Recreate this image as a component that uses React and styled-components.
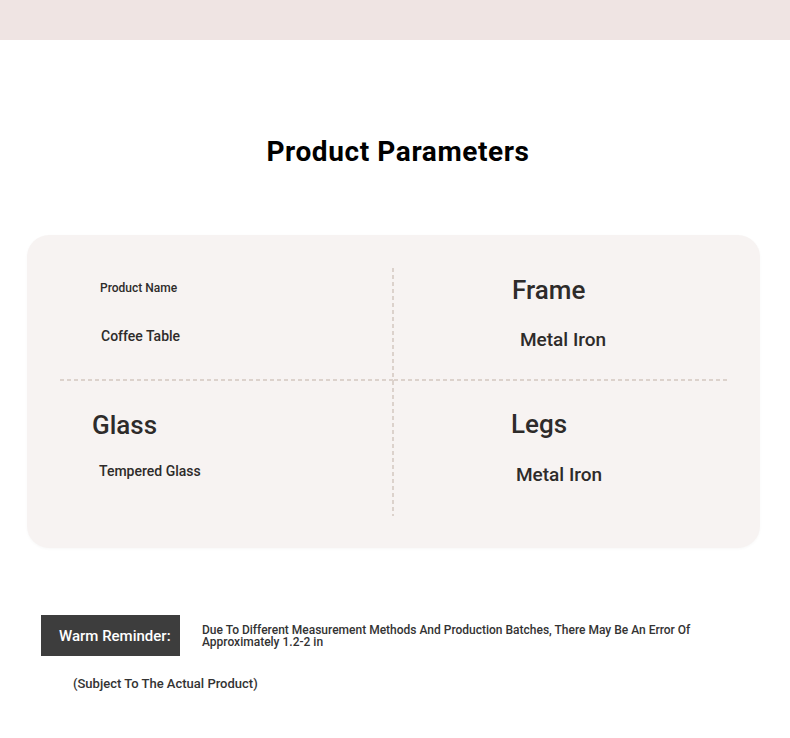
import React from 'react';
import styled, { createGlobalStyle } from 'styled-components';

const GlobalStyle = createGlobalStyle`
  body {
    margin: 0;
    background: #fff;
    font-family: Roboto, "Liberation Sans", sans-serif;
  }
`;

const dash = '#dcd2cc';

const params = [
  {
    label: 'Product Name', value: 'Coffee Table',
    labelSize: 12, valueSize: 14, labelX: 40, valueX: 41, labelTop: 13, valueGap: 32.5,
  },
  {
    label: 'Frame', value: 'Metal Iron',
    labelSize: 26, valueSize: 19, labelX: 118, valueX: 126, labelTop: 6.5, valueGap: 23,
  },
  {
    label: 'Glass', value: 'Tempered Glass',
    labelSize: 26, valueSize: 14, labelX: 32, valueX: 39, labelTop: 29, valueGap: 21.5,
  },
  {
    label: 'Legs', value: 'Metal Iron',
    labelSize: 26, valueSize: 19, labelX: 117, valueX: 122, labelTop: 28, valueGap: 24,
  },
];

const App = () => {
  return (
    <Page>
      <GlobalStyle />
      <TopBar />
      <TitleWrap>
        <Title>Product Parameters</Title>
      </TitleWrap>
      <Card>
        <Grid>
          {params.map((p, i) => (
            <Cell key={p.label} $right={i % 2 === 1} $bottom={i < 2}>
              <Label $size={p.labelSize} $x={p.labelX} $top={p.labelTop}>{p.label}</Label>
              <Value $size={p.valueSize} $x={p.valueX} $top={p.valueGap}>{p.value}</Value>
            </Cell>
          ))}
        </Grid>
      </Card>
      <Reminder>
        <ReminderTag>Warm Reminder:</ReminderTag>
        <ReminderText>
          Due To Different Measurement Methods And Production Batches, There May Be An Error Of
          Approximately 1.2-2 in
        </ReminderText>
      </Reminder>
      <Note>(Subject To The Actual Product)</Note>
    </Page>
  );
};

const Page = styled.div`
  width: 790px;
  height: 738px;
  background: #fff;
  overflow: hidden;
`;

const TopBar = styled.div`
  height: 40px;
  background: #efe4e3;
`;

const TitleWrap = styled.div`
  display: flex;
  justify-content: center;
  padding: 95px 0 67px 6px;
`;

const Title = styled.h1`
  margin: 0;
  font-size: 28px;
  line-height: 33px;
  font-weight: 700;
  color: #000;
  letter-spacing: 0.6px;
`;

const Card = styled.div`
  margin: 0 30px 0 27px;
  padding: 33px 33px 32px;
  background: #f7f3f2;
  border-radius: 22px;
  box-shadow: 0 1px 3px rgba(0, 0, 0, 0.03);
`;

const Grid = styled.div`
  display: grid;
  grid-template-columns: 334px 333px;
  grid-template-rows: 113px 135px;
`;

// dashed dividers drawn as short 2px dashes on the cell's right / bottom edge
const Cell = styled.div`
  display: flex;
  flex-direction: column;
  align-items: flex-start;
  background-repeat: no-repeat;
  background-image: ${(p) => [
    !p.$right && `repeating-linear-gradient(to bottom, ${dash} 0 4px, transparent 4px 7px)`,
    p.$bottom && `repeating-linear-gradient(to right, ${dash} 0 4px, transparent 4px 7px)`,
  ].filter(Boolean).join(', ') || 'none'};
  background-size: ${(p) => [
    !p.$right && '2px 100%',
    p.$bottom && '100% 2px',
  ].filter(Boolean).join(', ') || 'auto'};
  background-position: ${(p) => [
    !p.$right && 'right top',
    p.$bottom && 'left bottom',
  ].filter(Boolean).join(', ') || '0 0'};
`;

const Label = styled.div`
  margin-top: ${(p) => p.$top}px;
  margin-left: ${(p) => p.$x}px;
  font-size: ${(p) => p.$size}px;
  line-height: 1.2;
  font-weight: 500;
  color: #2e2b2a;
`;

const Value = styled.div`
  margin-top: ${(p) => p.$top}px;
  margin-left: ${(p) => p.$x}px;
  font-size: ${(p) => p.$size}px;
  line-height: 1.2;
  font-weight: 500;
  color: #2e2b2a;
`;

const Reminder = styled.div`
  display: flex;
  align-items: center;
  gap: 22px;
  margin: 67px 0 0 41px;
`;

const ReminderTag = styled.div`
  width: 139px;
  height: 41px;
  box-sizing: border-box;
  padding-left: 18px;
  display: flex;
  align-items: center;
  background: #3d3d3d;
  color: #fff;
  font-size: 15px;
  font-weight: 500;
`;

const ReminderText = styled.p`
  margin: 0;
  width: 510px;
  font-size: 12px;
  line-height: 12px;
  font-weight: 500;
  color: #333;
`;

const Note = styled.p`
  margin: 20px 0 0 73px;
  font-size: 13px;
  line-height: 16px;
  font-weight: 500;
  color: #333;
`;

export default App;
